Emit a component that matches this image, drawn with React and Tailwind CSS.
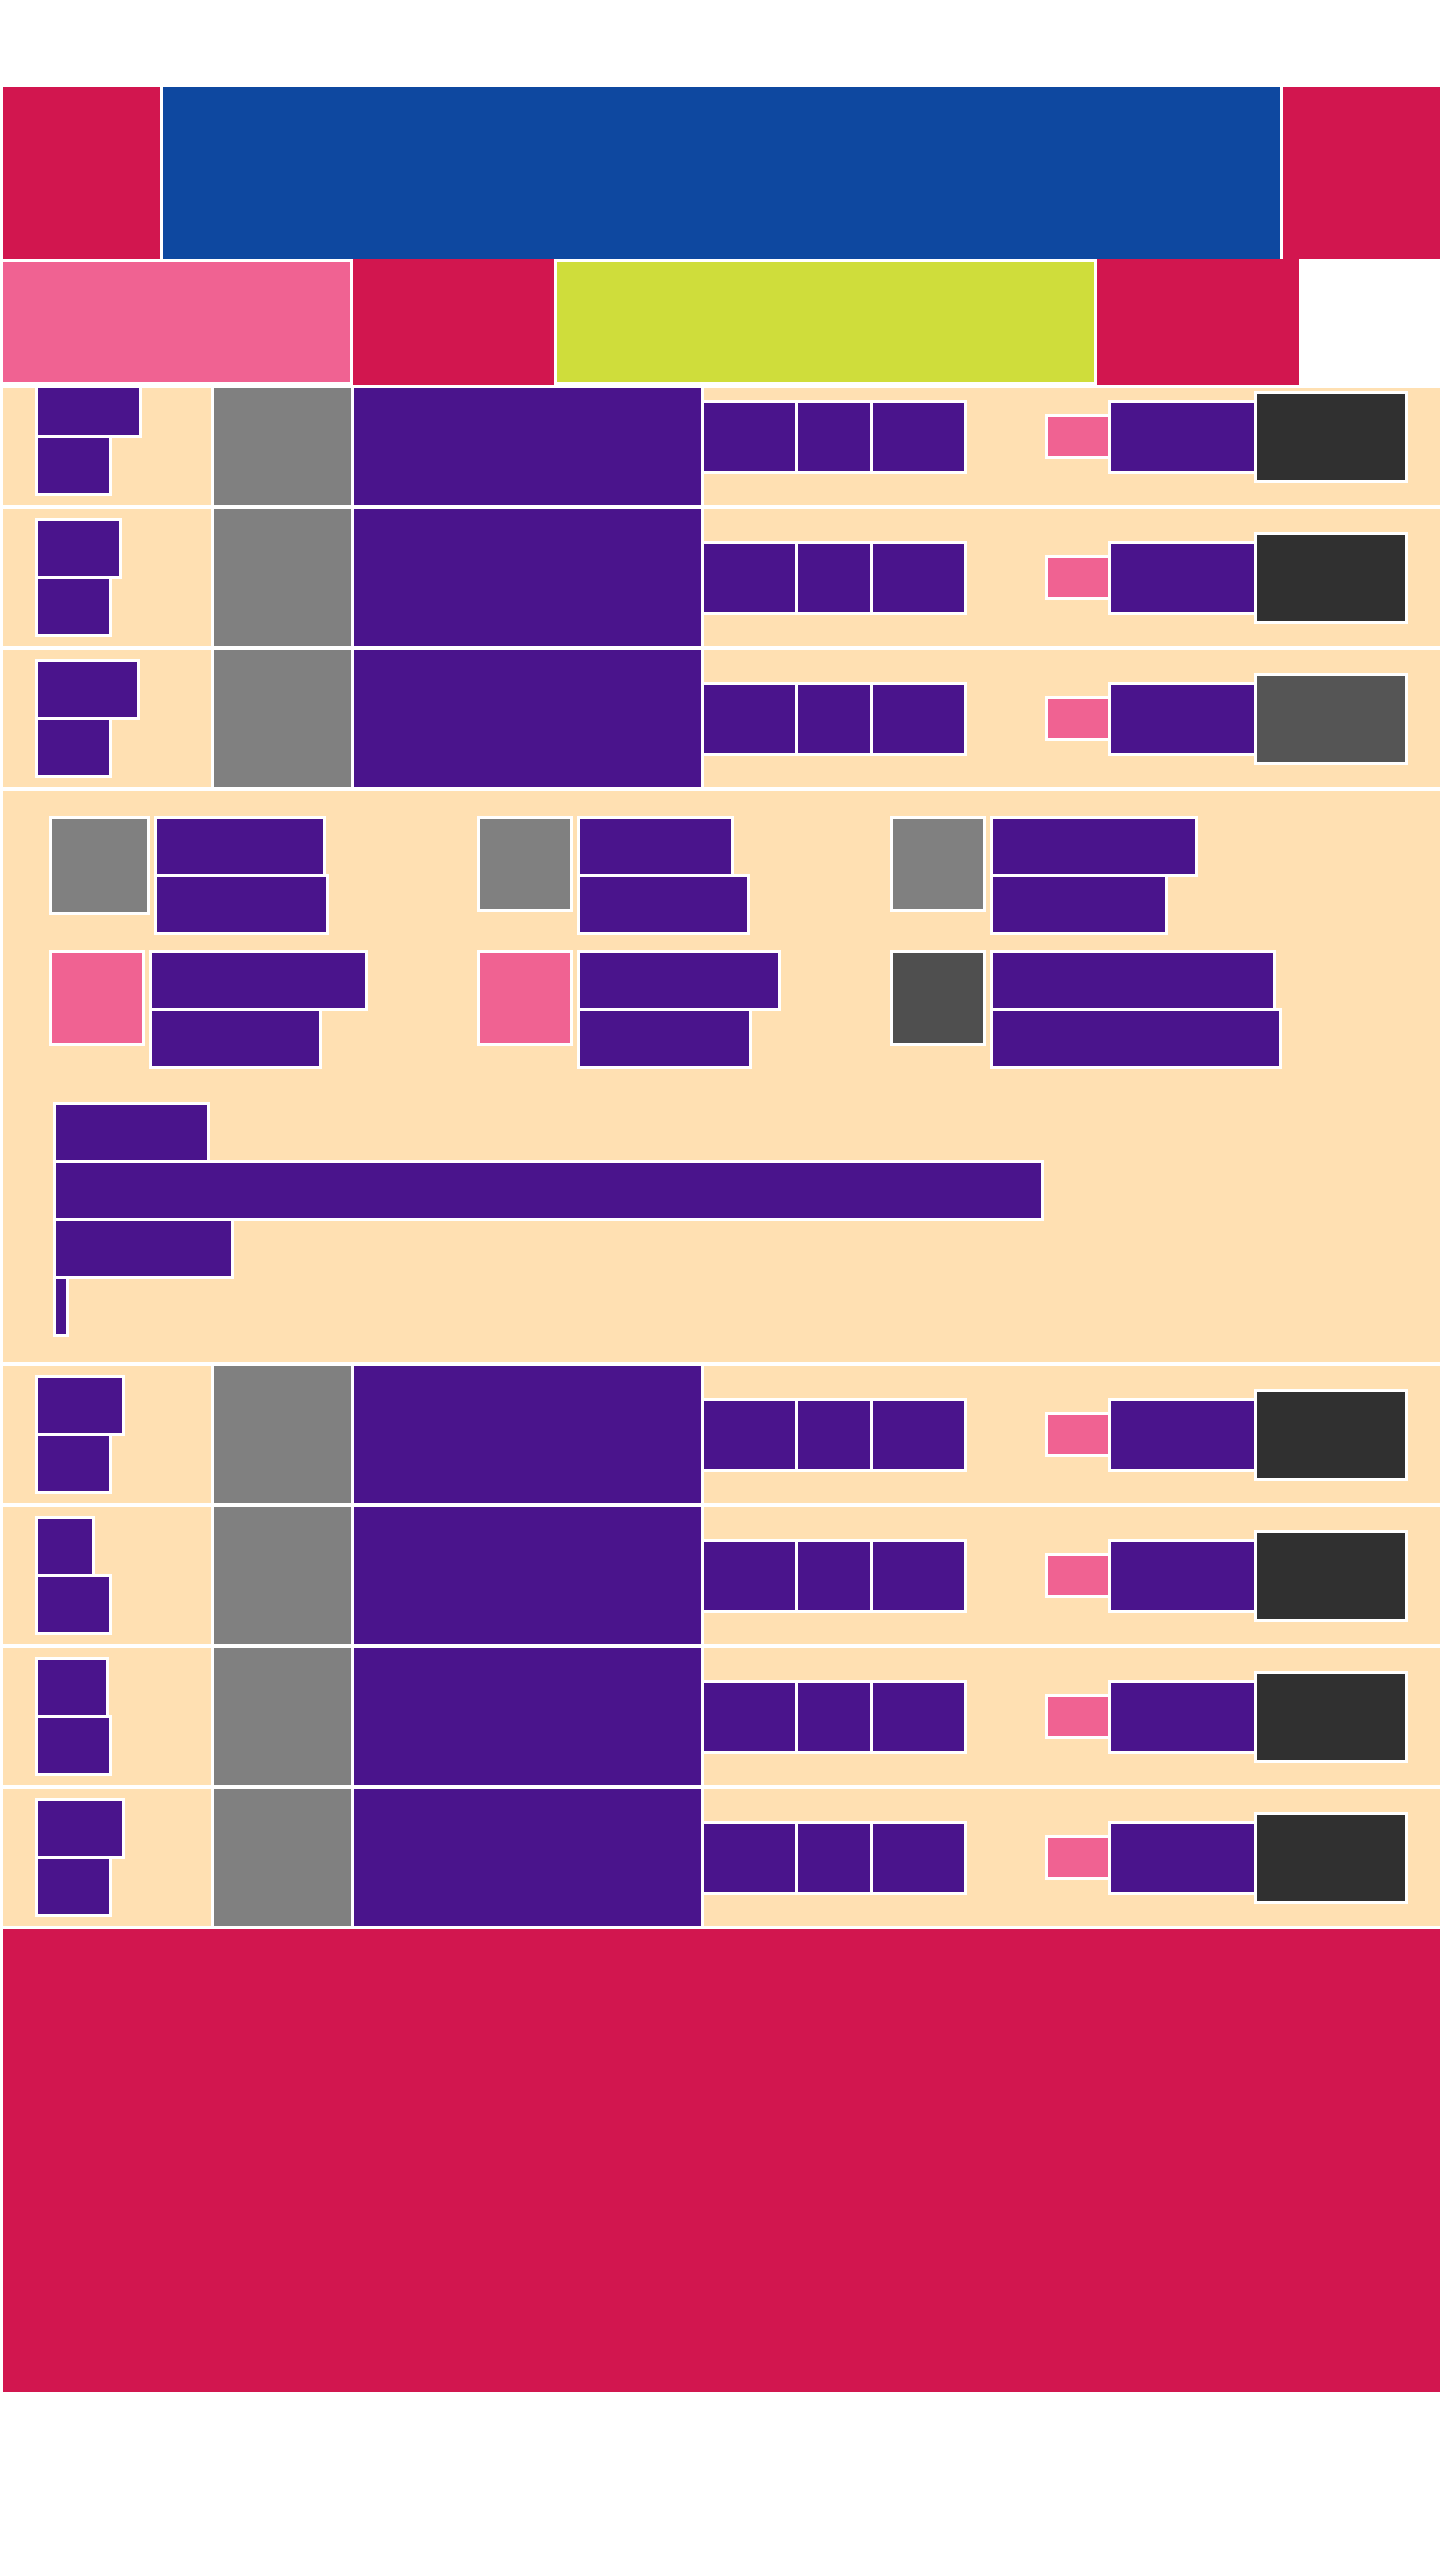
const rows = [
  { first: 'w-[101px]', dark: 'bg-[#303030]', clip: true },
  { first: 'w-[81px]', dark: 'bg-[#303030]' },
  { first: 'w-[99px]', dark: 'bg-[#555555]' },
];

const lowerRows = [
  { first: 'w-[84px]', dark: 'bg-[#303030]' },
  { first: 'w-[54px]', dark: 'bg-[#303030]' },
  { first: 'w-[68px]', dark: 'bg-[#303030]' },
  { first: 'w-[84px]', dark: 'bg-[#303030]' },
];

const box = 'outline-3 outline-solid outline-white';

function Row({ first, dark }) {
  return (
    <div className="flex h-[137px] gap-[3px]">
      <div className="flex w-[208px] flex-col justify-center gap-[3px] bg-[#ffe0b2] pl-[35px]">
        <div className={`h-[55px] bg-[#4a148c] ${box} ${first}`} />
        <div className={`h-[55px] w-[71px] bg-[#4a148c] ${box}`} />
      </div>
      <div className="w-[137px] bg-[#808080]" />
      <div className="w-[347px] bg-[#4a148c]" />
      <div className="flex flex-1 items-center bg-[#ffe0b2]">
        <div className="flex gap-[3px]">
          <div className={`h-[68px] w-[91px] bg-[#4a148c] ${box}`} />
          <div className={`h-[68px] w-[72px] bg-[#4a148c] ${box}`} />
          <div className={`h-[68px] w-[91px] bg-[#4a148c] ${box}`} />
        </div>
        <div className={`ml-[84px] h-[39px] w-[60px] bg-[#f06292] ${box}`} />
        <div className={`ml-[3px] h-[68px] w-[143px] bg-[#4a148c] ${box}`} />
        <div className={`ml-[3px] h-[86px] w-[148px] ${dark} ${box}`} />
      </div>
    </div>
  );
}

function Card({ media, mediaSize, top, bottom }) {
  return (
    <div className="flex items-start gap-[10px]">
      <div className={`${mediaSize} ${media} ${box}`} />
      <div className="flex flex-col gap-[3px]">
        <div className={`h-[55px] bg-[#4a148c] ${box} ${top}`} />
        <div className={`h-[55px] bg-[#4a148c] ${box} ${bottom}`} />
      </div>
    </div>
  );
}

export default function App() {
  return (
    <div className="min-h-[2560px] bg-white pt-[87px] pl-[3px]">
      {/* header */}
      <div className="flex h-[172px] gap-[3px]">
        <div className="w-[157px] bg-[#d2164f]" />
        <div className="w-[1117px] bg-[#0e48a0]" />
        <div className="flex-1 bg-[#d2164f]" />
      </div>
      <div className="relative z-10 mt-[3px] flex h-[120px] gap-[3px]">
        <div className="w-[347px] bg-[#f06292]" />
        <div className="-my-[3px] w-[201px] bg-[#d2164f]" />
        <div className="w-[537px] bg-[#cfdd3b]" />
        <div className="-my-[3px] w-[202px] bg-[#d2164f]" />
      </div>

      <div className="mt-[6px] flex flex-col gap-[4px]">
        {rows.map((r, i) =>
          r.clip ? (
            <div key={i} className="h-[117px] overflow-hidden">
              <div className="-mt-[20px]">
                <Row {...r} />
              </div>
            </div>
          ) : (
            <Row key={i} {...r} />
          )
        )}

        {/* middle block */}
        <div className="h-[571px] bg-[#ffe0b2] pt-[28px] pl-[49px]">
          <div className="grid grid-cols-[428px_413px_1fr] gap-y-[21px]">
            <Card media="bg-[#808080]" mediaSize="h-[93px] w-[95px]" top="w-[166px]" bottom="w-[169px]" />
            <Card media="bg-[#808080]" mediaSize="h-[90px] w-[90px]" top="w-[151px]" bottom="w-[167px]" />
            <Card media="bg-[#808080]" mediaSize="h-[90px] w-[90px]" top="w-[202px]" bottom="w-[172px]" />
            <Card media="bg-[#f06292]" mediaSize="h-[90px] w-[90px]" top="w-[213px]" bottom="w-[167px]" />
            <Card media="bg-[#f06292]" mediaSize="h-[90px] w-[90px]" top="w-[198px]" bottom="w-[169px]" />
            <Card media="bg-[#4f4f4f]" mediaSize="h-[90px] w-[90px]" top="w-[280px]" bottom="w-[286px]" />
          </div>
          <div className="mt-[39px] ml-[4px] flex flex-col gap-[3px]">
            <div className={`h-[55px] w-[151px] bg-[#4a148c] ${box}`} />
            <div className={`h-[55px] w-[985px] bg-[#4a148c] ${box}`} />
            <div className={`h-[55px] w-[175px] bg-[#4a148c] ${box}`} />
            <div className={`h-[55px] w-[10px] bg-[#4a148c] ${box}`} />
          </div>
        </div>

        {lowerRows.map((r, i) => (
          <Row key={i} {...r} />
        ))}
      </div>

      <div className="mt-[3px] h-[463px] bg-[#d2164f]" />
    </div>
  );
}
